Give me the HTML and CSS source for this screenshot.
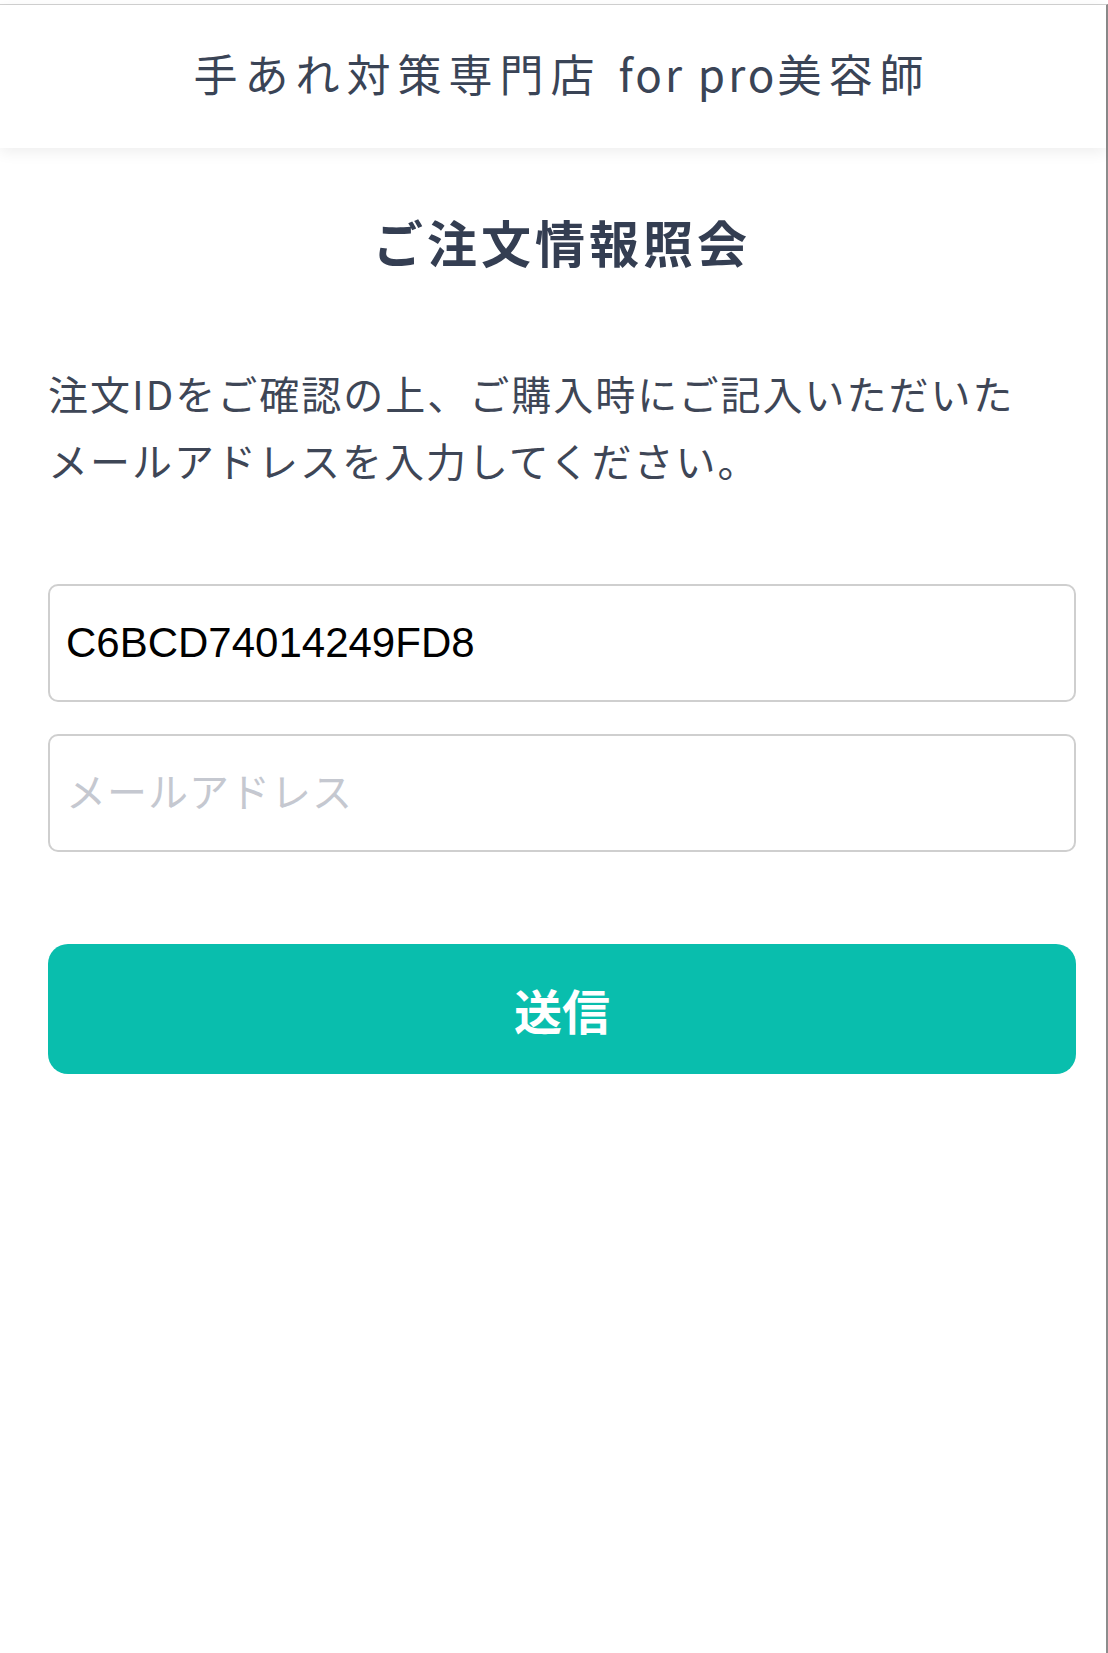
FILE: index.html
```html
<!DOCTYPE html>
<html lang="ja">
<head>
    <meta charset="UTF-8">
    <meta name="viewport" content="width=device-width, initial-scale=1.0">
    <title>ご注文情報照会</title>
    <link rel="stylesheet" href="styles.css">
</head>
<body>
    <div class="page">
        <header class="site-header">
            <p class="shop-name">手あれ対策専門店 <span class="latin">for pro</span>美容師</p>
        </header>

        <main class="content">
            <h1 class="page-title">ご注文情報照会</h1>
            <p class="lead">注文IDをご確認の上、ご購入時にご記入いただいた<br>メールアドレスを入力してください。</p>

            <form class="lookup-form">
                <input type="text" class="field" id="orderId" value="C6BCD74014249FD8">
                <input type="email" class="field" id="email" placeholder="メールアドレス">
                <button type="button" class="submit-button">送信</button>
            </form>
        </main>
    </div>
</body>
</html>
```

FILE: styles.css
```css
* {
    box-sizing: border-box;
    margin: 0;
    padding: 0;
}

body {
    background-color: #fff;
    padding-top: 4px;
    font-family: "Noto Sans CJK JP", "Noto Sans", sans-serif;
    color: #3b4456;
}

.page {
    min-height: 1649px;
    border-top: 1px solid #d2d2d2;
    border-right: 2px solid #8c8c8c;
}

.site-header {
    height: 143px;
    display: flex;
    align-items: center;
    justify-content: center;
    padding: 0 30px 8px 48px;
    background-color: #fff;
    box-shadow: 0 4px 14px rgba(0, 0, 0, 0.07);
}

.shop-name {
    font-size: 44px;
    letter-spacing: 7px;
    color: #3a4456;
    white-space: nowrap;
}

.shop-name .latin {
    letter-spacing: 3px;
}

.content {
    padding: 56px 30px 0 48px;
}

.page-title {
    font-size: 50px;
    line-height: 75px;
    font-weight: 700;
    letter-spacing: 4px;
    text-align: center;
    color: #343e52;
}

.lead {
    margin-top: 81px;
    font-size: 40px;
    line-height: 67px;
    letter-spacing: 2px;
    color: #3e4656;
}

.lookup-form {
    display: flex;
    flex-direction: column;
    margin-top: 90px;
}

.field {
    height: 118px;
    padding: 0 16px;
    border: 2px solid #cfcfcf;
    border-radius: 10px;
    background: #fff;
    font-family: "Liberation Sans", "Noto Sans CJK JP", sans-serif;
    font-size: 42px;
    color: #000;
    outline: none;
}

.field + .field {
    margin-top: 32px;
}

.field::placeholder {
    font-family: "Noto Sans CJK JP", sans-serif;
    font-size: 40px;
    letter-spacing: 1px;
    color: #c5c8d0;
}

.submit-button {
    margin-top: 92px;
    height: 130px;
    border: none;
    border-radius: 20px;
    background-color: #09bead;
    color: #fff;
    font-family: "Noto Sans CJK JP", sans-serif;
    font-size: 48px;
    font-weight: 700;
    cursor: pointer;
}
```
